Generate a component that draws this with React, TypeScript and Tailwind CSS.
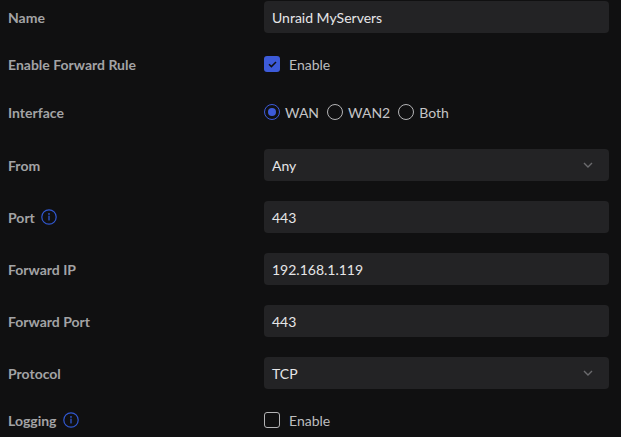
import React from 'react';

const font = { fontFamily: 'Lato, "Open Sans", sans-serif' };

const InfoIcon = () => (
    <svg width="16" height="16" viewBox="0 0 16 16" fill="none" className="ml-[6px]">
        <circle cx="8" cy="8" r="7.2" stroke="#3158d0" strokeWidth="1.2" />
        <circle cx="8" cy="4.9" r="0.9" fill="#3158d0" />
        <rect x="7.35" y="6.6" width="1.3" height="5" rx="0.5" fill="#3158d0" />
    </svg>
);

const Chevron = () => (
    <svg width="10" height="6" viewBox="0 0 10 6" fill="none">
        <path d="M1 1l4 4 4-4" stroke="#6b6b6e" strokeWidth="1.4" />
    </svg>
);

const Label = ({ text, info }: { text: string, info?: boolean }) => (
    <div className="w-[264px] pl-2 flex items-center text-[14px] font-bold text-[#a3a3a5]">
        {text}
        {info && <InfoIcon />}
    </div>
);

const TextBox = ({ value, select }: { value: string, select?: boolean }) => (
    <div className="flex-1 mr-3 h-8 rounded-[4px] bg-[#232325] flex items-center justify-between pl-2 pr-4 text-[14px] text-[#e6e6e8]">
        <span>{value}</span>
        {select && <Chevron />}
    </div>
);

const Checkbox = ({ checked }: { checked: boolean }) => (
    <div className="flex items-center">
        {checked ? (
            <div className="w-4 h-4 rounded-[3px] bg-[#3d5bd9] flex items-center justify-center">
                <svg width="9" height="7" viewBox="0 0 9 7" fill="none">
                    <path d="M1 3.3l2.4 2.3L8 1" stroke="#111" strokeWidth="1.5" />
                </svg>
            </div>
        ) : (
            <div className="w-4 h-4 rounded-[3px] border border-[#b4b4b6]" />
        )}
        <span className="ml-[9px] text-[14px] text-[#bdbdbf]">Enable</span>
    </div>
);

const Radio = ({ label, checked }: { label: string, checked?: boolean }) => (
    <div className="flex items-center mr-[8px]">
        <div className={`w-4 h-4 rounded-full border flex items-center justify-center ${checked ? 'border-[#3d5bd9]' : 'border-[#b4b4b6]'}`}>
            {checked && <div className="w-2 h-2 rounded-full bg-[#3d5bd9]" />}
        </div>
        <span className="ml-[5px] text-[14px] text-[#c4c4c6]">{label}</span>
    </div>
);

export default function App() {
    return (
        <div className="w-[621px] h-[437px] bg-[#101011] overflow-hidden pt-px" style={font}>
            <div className="flex h-8">
                <Label text="Name" />
                <TextBox value="Unraid MyServers" />
            </div>
            <div className="flex h-6 mt-[19px]">
                <Label text="Enable Forward Rule" />
                <Checkbox checked />
            </div>
            <div className="flex h-6 mt-[24px]">
                <Label text="Interface" />
                <div className="flex items-center">
                    <Radio label="WAN" checked />
                    <Radio label="WAN2" />
                    <Radio label="Both" />
                </div>
            </div>
            <div className="flex h-8 mt-[25px]">
                <Label text="From" />
                <TextBox value="Any" select />
            </div>
            <div className="flex h-8 mt-5">
                <Label text="Port" info />
                <TextBox value="443" />
            </div>
            <div className="flex h-8 mt-5">
                <Label text="Forward IP" />
                <TextBox value="192.168.1.119" />
            </div>
            <div className="flex h-8 mt-5">
                <Label text="Forward Port" />
                <TextBox value="443" />
            </div>
            <div className="flex h-8 mt-5">
                <Label text="Protocol" />
                <TextBox value="TCP" select />
            </div>
            <div className="flex h-6 mt-[19px]">
                <Label text="Logging" info />
                <Checkbox checked={false} />
            </div>
        </div>
    );
}
